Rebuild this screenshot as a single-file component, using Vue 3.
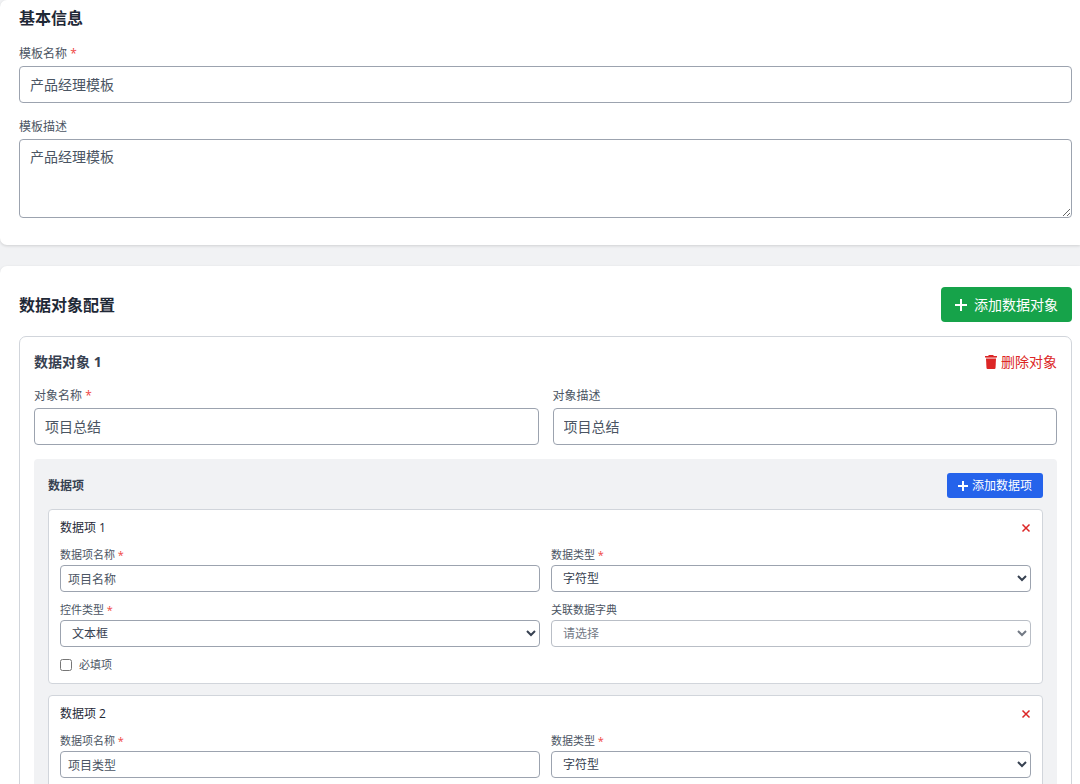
<script setup>
import { ref } from 'vue'

const template = ref({ name: '产品经理模板', description: '产品经理模板' })

const newItem = (name = '') => ({ name, dataType: '字符型', control: '文本框', dict: '', required: false })

const objects = ref([
  {
    name: '项目总结',
    description: '项目总结',
    items: [newItem('项目名称'), newItem('项目类型')],
  },
])

const addObject = () => objects.value.push({ name: '', description: '', items: [newItem()] })
</script>

<template>
  <main class="page">
    <section class="card">
      <h2 class="section-title">基本信息</h2>
      <div class="field">
        <label for="tpl-name">模板名称 <span class="req">*</span></label>
        <input id="tpl-name" v-model="template.name" class="control" type="text" />
      </div>
      <div class="field">
        <label for="tpl-desc">模板描述</label>
        <textarea id="tpl-desc" v-model="template.description" class="control area"></textarea>
      </div>
    </section>

    <section class="card">
      <header class="row section-head">
        <h2 class="section-title">数据对象配置</h2>
        <button class="btn green" type="button" @click="addObject">
          <svg class="plus" viewBox="0 0 12 12" aria-hidden="true"><path d="M6 0v12M0 6h12" /></svg>
          添加数据对象
        </button>
      </header>

      <article v-for="(obj, oi) in objects" :key="oi" class="object">
        <header class="row object-head">
          <h3>数据对象 {{ oi + 1 }}</h3>
          <button class="delete" type="button" @click="objects.splice(oi, 1)">
            <svg viewBox="0 0 12 14" aria-hidden="true">
              <path d="M4 0h4l1 1h3v1.500H0V1h3z" />
              <path class="faint" d="M1 2.500h10V4H1z" />
              <path d="M1 4h10l-.5 9q-.1 1-1 1h-7q-.9 0-1-1z" />
            </svg>
            删除对象
          </button>
        </header>

        <div class="grid wide">
          <div class="field">
            <label :for="`obj-${oi}-name`">对象名称 <span class="req">*</span></label>
            <input :id="`obj-${oi}-name`" v-model="obj.name" class="control" type="text" />
          </div>
          <div class="field">
            <label :for="`obj-${oi}-desc`">对象描述</label>
            <input :id="`obj-${oi}-desc`" v-model="obj.description" class="control" type="text" />
          </div>
        </div>

        <div class="items">
          <header class="row">
            <h4>数据项</h4>
            <button class="btn blue" type="button" @click="obj.items.push(newItem())">
              <svg class="plus" viewBox="0 0 12 12" aria-hidden="true"><path d="M6 0v12M0 6h12" /></svg>
              添加数据项
            </button>
          </header>

          <div v-for="(item, i) in obj.items" :key="i" class="item">
            <header class="row item-head">
              <h5>数据项 {{ i + 1 }}</h5>
              <button class="close" type="button" aria-label="删除数据项" @click="obj.items.splice(i, 1)">
                <svg viewBox="0 0 10 10" aria-hidden="true"><path d="M1.500 1.500l7 7M8.500 1.500l-7 7" /></svg>
              </button>
            </header>
            <div class="grid small">
              <div class="field">
                <label :for="`i-${oi}-${i}-name`">数据项名称 <span class="req">*</span></label>
                <input :id="`i-${oi}-${i}-name`" v-model="item.name" class="control" type="text" />
              </div>
              <div class="field">
                <label :for="`i-${oi}-${i}-type`">数据类型 <span class="req">*</span></label>
                <select :id="`i-${oi}-${i}-type`" v-model="item.dataType" class="control">
                  <option>字符型</option>
                </select>
              </div>
              <div class="field">
                <label :for="`i-${oi}-${i}-control`">控件类型 <span class="req">*</span></label>
                <select :id="`i-${oi}-${i}-control`" v-model="item.control" class="control">
                  <option>文本框</option>
                </select>
              </div>
              <div class="field">
                <label :for="`i-${oi}-${i}-dict`">关联数据字典</label>
                <select :id="`i-${oi}-${i}-dict`" v-model="item.dict" class="control" disabled>
                  <option value="">请选择</option>
                </select>
              </div>
            </div>
            <label class="check">
              <input v-model="item.required" type="checkbox" />
              必填项
            </label>
          </div>
        </div>
      </article>
    </section>
  </main>
</template>

<style>
body {
  background: #f1f2f4;
}
html {
  scrollbar-width: none;
}
</style>

<style scoped>
.page {
  display: flex;
  flex-direction: column;
  gap: 21px;
  color: #374151;
  font-family: "Open Sans", "Noto Sans CJK SC", sans-serif;
  font-size: 14px;
  line-height: 20px;
}
.page *,
.page {
  box-sizing: border-box;
}
h2, h3, h4, h5 {
  margin: 0;
}
button, input, select, textarea {
  font: inherit;
  color: inherit;
  margin: 0;
}
button {
  cursor: pointer;
  border: 0;
}
.card {
  background: #fff;
  border-radius: 7px 0 0 7px;
  box-shadow: 0 1px 3px rgba(0, 0, 0, 0.14);
  padding: 21px 8px 27px 19px;
}
.card:first-child {
  padding-top: 6px;
}
.section-title {
  font-size: 16px;
  line-height: 24px;
  font-weight: 700;
  color: #1f2937;
}
.row {
  display: flex;
  align-items: center;
  justify-content: space-between;
}
.section-head {
  margin-bottom: 14px;
}
.field {
  display: flex;
  flex-direction: column;
  min-width: 0;
}
.card > .field {
  margin-top: 15px;
}
label {
  font-size: 12px;
  line-height: 18px;
  margin-bottom: 3px;
  color: #4b5563;
}
.req {
  color: #ef4444;
}
.control {
  width: 100%;
  height: 37px;
  border: 1px solid #9ca3af;
  border-radius: 4px;
  background: #fff;
  padding: 7px 10px 9px;
  outline: 0;
}
input.control,
textarea.control {
  color: #4b5563;
}
.area {
  display: block;
  height: 79px;
  resize: vertical;
}
.btn {
  display: flex;
  align-items: center;
  color: #fff;
  border-radius: 4px;
}
.plus {
  fill: none;
  stroke: currentColor;
}
.green {
  gap: 7px;
  height: 35px;
  padding: 0 14px;
  background: #16a34a;
}
.green .plus {
  width: 12px;
  height: 12px;
  stroke-width: 2;
}
.blue {
  gap: 4px;
  height: 25px;
  padding: 0 11px;
  background: #2563eb;
  border-radius: 3px;
  font-size: 12px;
}
.blue .plus {
  width: 10px;
  height: 10px;
  stroke-width: 2.4;
}
.object {
  border: 1px solid #d1d5db;
  border-radius: 7px;
  padding: 14px;
}
.object + .object {
  margin-top: 14px;
}
.object-head {
  height: 21px;
  margin-bottom: 15px;
}
h3 {
  font-size: 14px;
  font-weight: 700;
}
.delete {
  display: flex;
  align-items: center;
  gap: 4px;
  padding: 0;
  background: none;
  color: #dc2626;
}
.delete svg {
  width: 12px;
  height: 14px;
  fill: currentColor;
}
.faint {
  opacity: 0.5;
}
.grid {
  display: grid;
  grid-template-columns: 1fr 1fr;
}
.wide {
  gap: 14px;
}
.items {
  margin-top: 14px;
  padding: 14px;
  background: #f1f2f4;
  border-radius: 4px;
}
h4 {
  font-size: 12px;
  font-weight: 600;
}
.item {
  margin-top: 11px;
  padding: 9px 11px;
  border: 1px solid #d1d5db;
  border-radius: 4px;
  background: #fff;
}
.item-head {
  height: 18px;
  margin-bottom: 11px;
}
h5 {
  font-size: 12px;
  font-weight: 400;
  color: #1f2937;
}
.close {
  display: flex;
  padding: 0;
  background: none;
  color: #dc2626;
}
.close svg {
  width: 10px;
  height: 10px;
  fill: none;
  stroke: currentColor;
  stroke-width: 1.5;
}
.small {
  gap: 11px;
}
.small label,
.check {
  font-size: 11px;
  line-height: 14px;
}
.small label {
  margin-bottom: 3px;
}
.small .control {
  height: 27px;
  padding: 3px 7px;
  font-size: 12px;
  line-height: 18px;
}
select:disabled {
  opacity: 0.7;
}
.check {
  display: flex;
  align-items: center;
  gap: 7px;
  width: fit-content;
  margin: 11px 0 2px;
}
.check input {
  width: 12px;
  height: 12px;
}
</style>
